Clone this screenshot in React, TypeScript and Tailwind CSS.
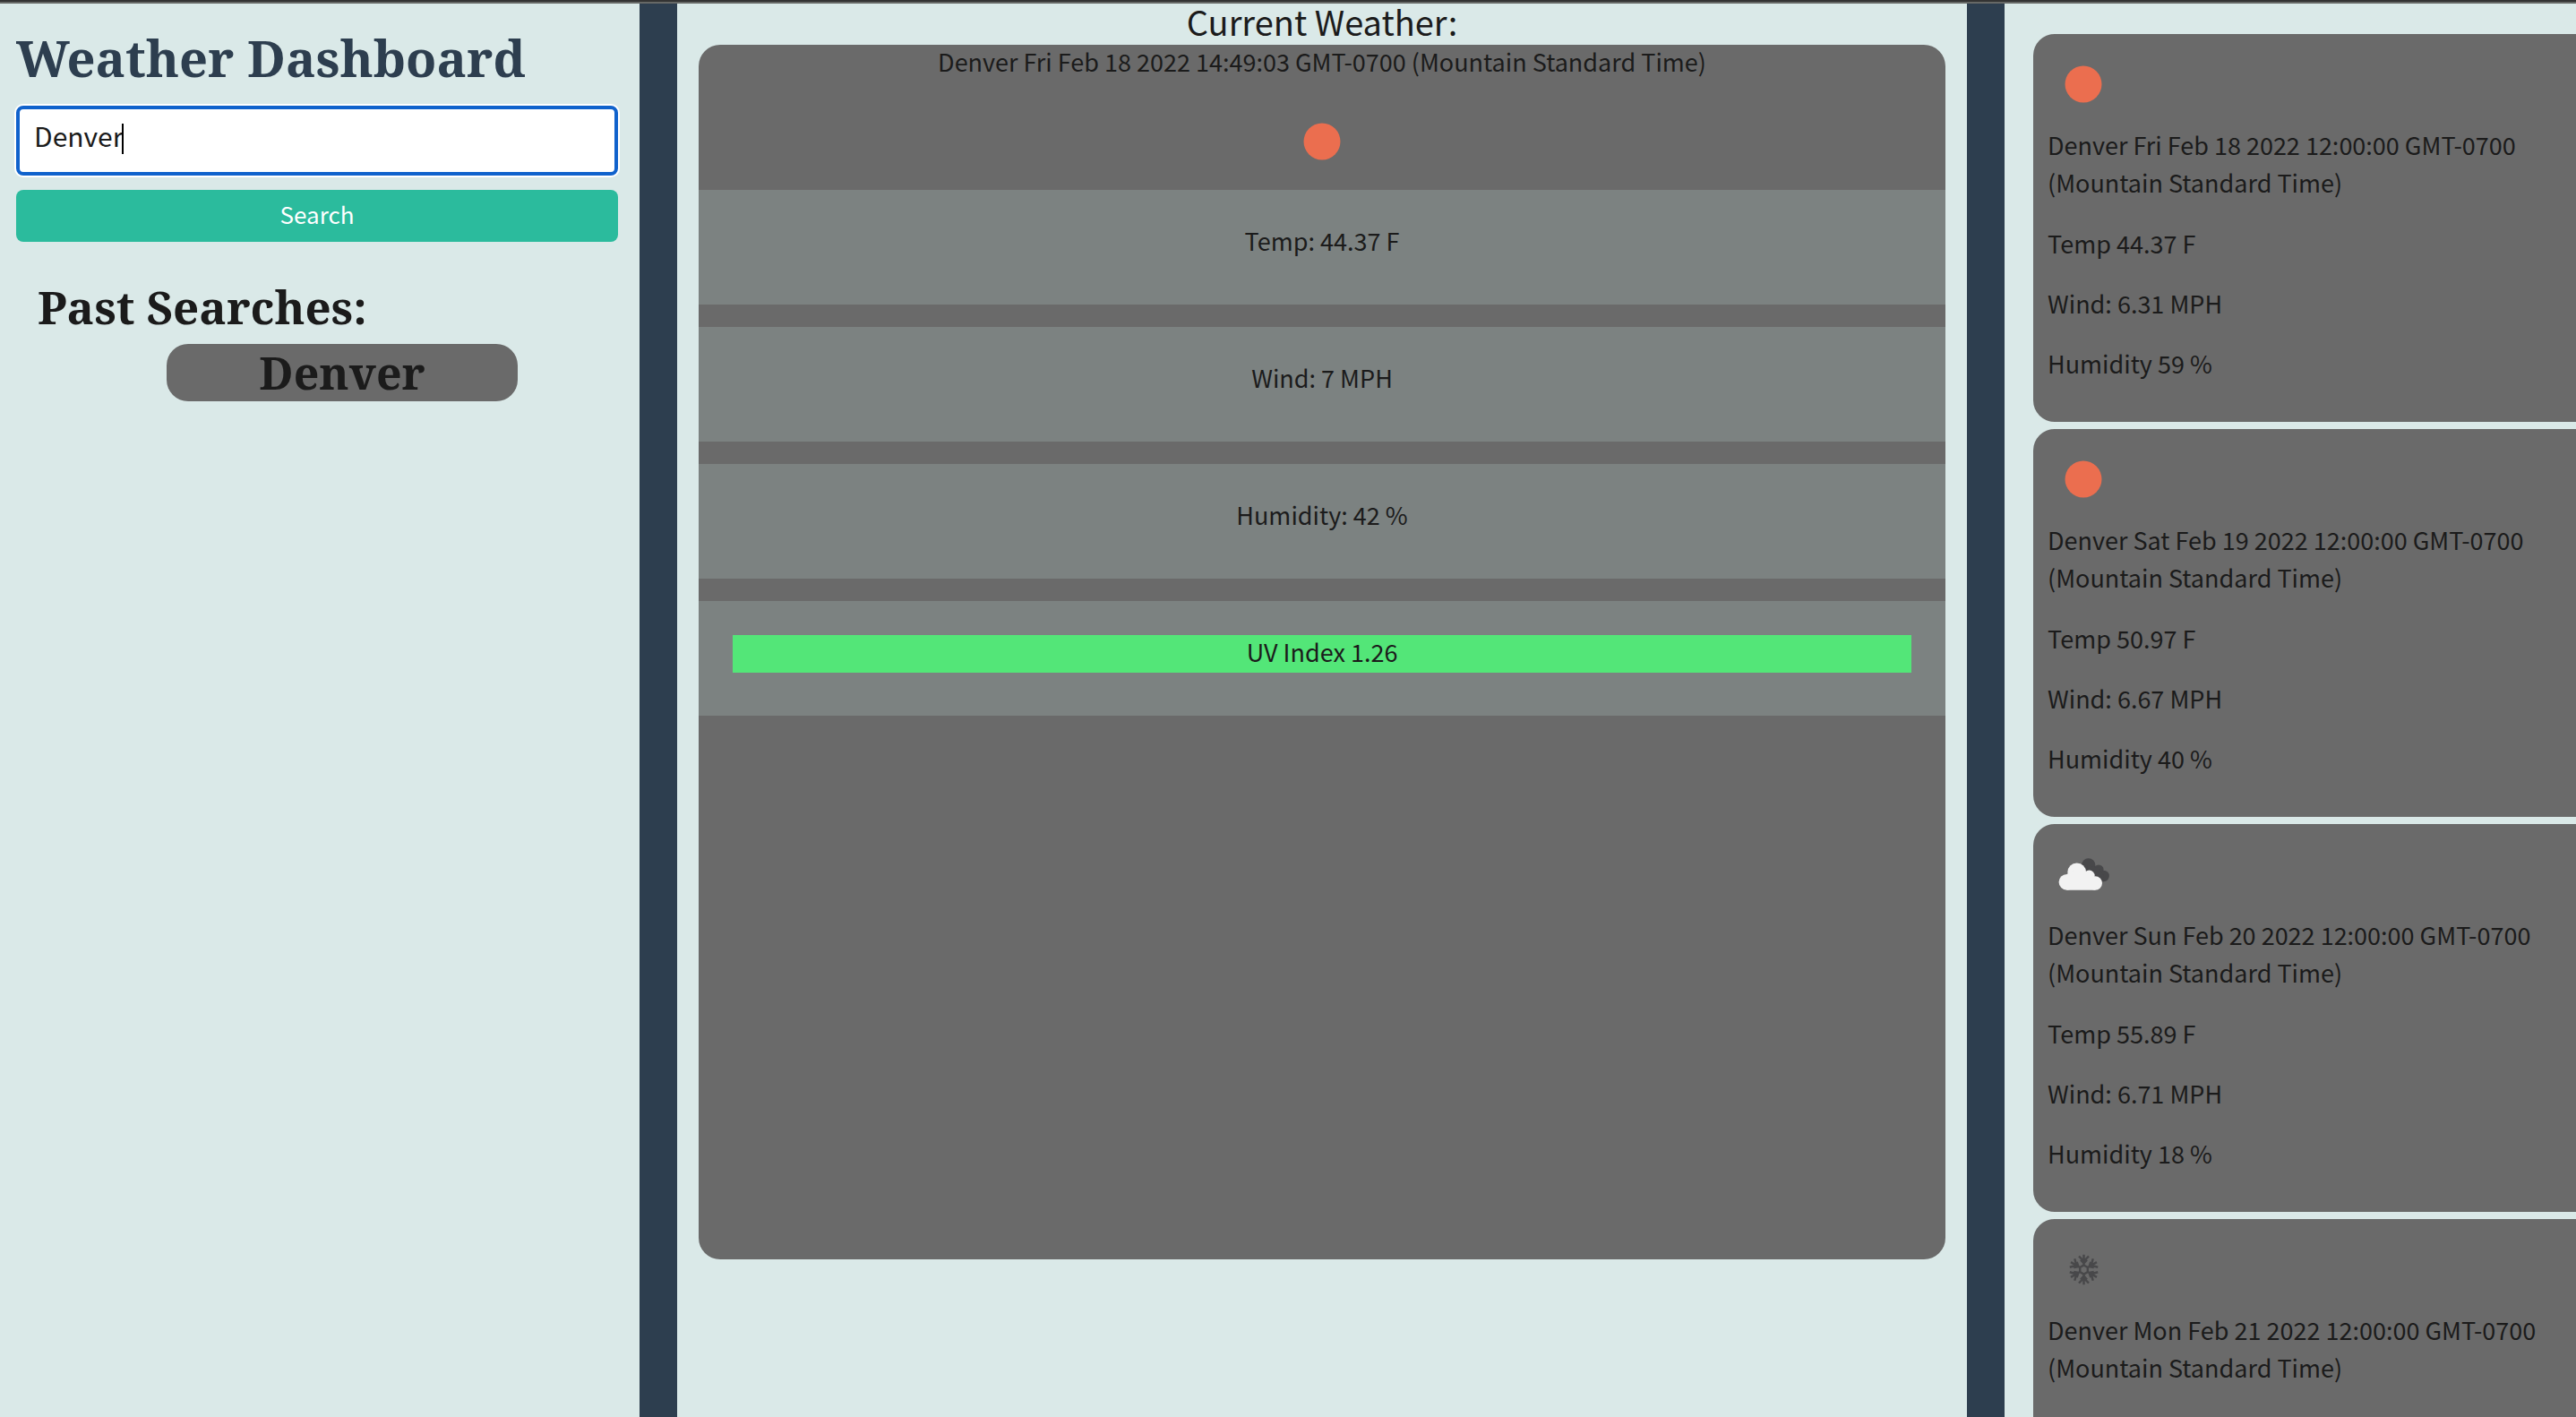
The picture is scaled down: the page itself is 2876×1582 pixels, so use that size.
import { useState } from 'react';

type Sky = 'sun' | 'clouds' | 'snow';

type Day = { sky: Sky; date: string; readings: string[] };

const days: Day[] = [
  {
    sky: 'sun',
    date: 'Denver Fri Feb 18 2022 12:00:00 GMT-0700 (Mountain Standard Time)',
    readings: ['Temp 44.37 F', 'Wind: 6.31 MPH', 'Humidity 59 %'],
  },
  {
    sky: 'sun',
    date: 'Denver Sat Feb 19 2022 12:00:00 GMT-0700 (Mountain Standard Time)',
    readings: ['Temp 50.97 F', 'Wind: 6.67 MPH', 'Humidity 40 %'],
  },
  {
    sky: 'clouds',
    date: 'Denver Sun Feb 20 2022 12:00:00 GMT-0700 (Mountain Standard Time)',
    readings: ['Temp 55.89 F', 'Wind: 6.71 MPH', 'Humidity 18 %'],
  },
  {
    sky: 'snow',
    date: 'Denver Mon Feb 21 2022 12:00:00 GMT-0700 (Mountain Standard Time)',
    readings: [],
  },
];

const current = ['Temp: 44.37 F', 'Wind: 7 MPH', 'Humidity: 42 %'];

function SkyIcon({ sky, className = '' }: { sky: Sky; className?: string }) {
  return (
    <svg viewBox="0 0 80 80" aria-hidden="true" className={`size-20 ${className}`}>
      {sky === 'sun' && <circle cx="40" cy="40" r="20.5" fill="#eb6e4f" />}
      {sky === 'clouds' && (
        <>
          <g fill="#48484a">
            <circle cx="45.7" cy="30" r="7.7" />
            <circle cx="57" cy="35" r="5.6" />
            <circle cx="62.7" cy="42" r="6.2" />
            <path d="M44 30 L57 33 L63 42 L62.7 48.2 L46 46 Z" />
          </g>
          <g fill="#f2f2f2">
            <circle cx="21.5" cy="48.8" r="8.9" />
            <circle cx="32.7" cy="37.8" r="10.4" />
            <circle cx="46.5" cy="41.8" r="6.2" />
            <circle cx="53.3" cy="50" r="7.7" />
            <path d="M21.5 40 L32 34 L48 40 L53.3 46 V57.7 H21.5 Z" />
          </g>
        </>
      )}
      {sky === 'snow' && (
        <g stroke="#48484a" strokeWidth="2.4" fill="none">
          <path d="M40.5 35.5 L44.8 38 V43 L40.5 45.5 L36.2 43 V38 Z" />
          {[0, 60, 120, 180, 240, 300].map((a) => (
            <path
              key={a}
              transform={`rotate(${a} 40.5 40.5)`}
              d="M40.5 35.5 V23.8 M35 25.5 L40.5 31 L46 25.5 M37 29.5 L40.5 33.5 L44 29.5"
            />
          ))}
        </g>
      )}
    </svg>
  );
}

function Line({ children, className = '' }: { children: string; className?: string }) {
  return <p className={`pt-px pb-[5px] leading-9 ${className}`}>{children}</p>;
}

function DayCard({ day }: { day: Day }) {
  return (
    <article className="min-h-[432px] shrink-0 rounded-l-3xl bg-[#6a6a6a] pt-4 pb-[42px] pl-4">
      <SkyIcon sky={day.sky} />
      <div className="mt-[7px] flex flex-col gap-[25px]">
        <p className="pb-[3px] leading-[42px]">{day.date}</p>
        {day.readings.map((reading) => (
          <Line key={reading}>{reading}</Line>
        ))}
      </div>
    </article>
  );
}

export default function App() {
  const [city, setCity] = useState('Denver');

  return (
    <div className="flex h-screen flex-col overflow-hidden border-t-2 border-[#333333] font-['Noto_Sans_CJK_SC','Noto_Sans',sans-serif] text-[27px] text-[#1b1b1b]">
      <main className="grid min-h-0 flex-1 grid-cols-[714fr_1440fr_638fr] gap-x-[42px] border-t-2 border-[#666866] bg-[#2d3e4f]">
        <section className="bg-[#dae9e8] pt-7 pr-6 pl-[18px]">
          <h1 className="font-['Noto_Serif','DejaVu_Serif',serif] text-[56px] leading-16 font-bold text-[#2d3e4f]">
            Weather Dashboard
          </h1>
          <form className="mt-[22px] flex flex-col gap-4" onSubmit={(e) => e.preventDefault()}>
            <div className="relative">
              <input
                type="text"
                aria-label="City"
                value={city}
                onChange={(e) => setCity(e.target.value)}
                className="block h-[78px] w-full rounded-lg border-4 border-[#1062cc] bg-white pb-3 pl-4 text-[30px] caret-transparent ring-2 ring-white outline-none"
              />
              <span className="absolute top-5 left-[118px] h-[34px] w-0.5 bg-black" />
            </div>
            <button type="submit" className="h-[58px] rounded-lg bg-[#2bbb9d] pb-1 text-[26px] leading-9 text-white">
              Search
            </button>
          </form>
          <div className="mt-[42px] font-['Noto_Serif','DejaVu_Serif',serif] text-[50px] font-bold">
            <h2 className="pl-6 text-[51px] leading-[60px]">Past Searches:</h2>
            <div className="mt-3 flex justify-center pl-14">
              <button type="button" className="w-[392px] rounded-3xl bg-[#6a6a6a] leading-16">
                Denver
              </button>
            </div>
          </div>
        </section>

        <section className="flex flex-col bg-[#dae9e8] px-6 text-center">
          <h2 className="pb-1.5 text-[38px] leading-10">Current Weather:</h2>
          <div className="mb-44 flex-1 rounded-3xl bg-[#6a6a6a]">
            <Line>Denver Fri Feb 18 2022 14:49:03 GMT-0700 (Mountain Standard Time)</Line>
            <SkyIcon sky="sun" className="mx-auto mt-[26px] mb-3.5" />
            <div className="flex flex-col gap-[25px]">
              {current.map((text) => (
                <div key={text} className="bg-[#7c8281] px-[38px] pt-[38px] pb-12">
                  <Line>{text}</Line>
                </div>
              ))}
              <div className="bg-[#7c8281] px-[38px] pt-[38px] pb-12">
                <Line className="bg-[#53e678]">UV Index 1.26</Line>
              </div>
            </div>
          </div>
        </section>

        <section className="flex min-h-0 flex-col gap-2 overflow-hidden bg-[#dae9e8] pt-[34px] pl-8">
          {days.map((day) => (
            <DayCard key={day.date} day={day} />
          ))}
        </section>
      </main>
    </div>
  );
}
